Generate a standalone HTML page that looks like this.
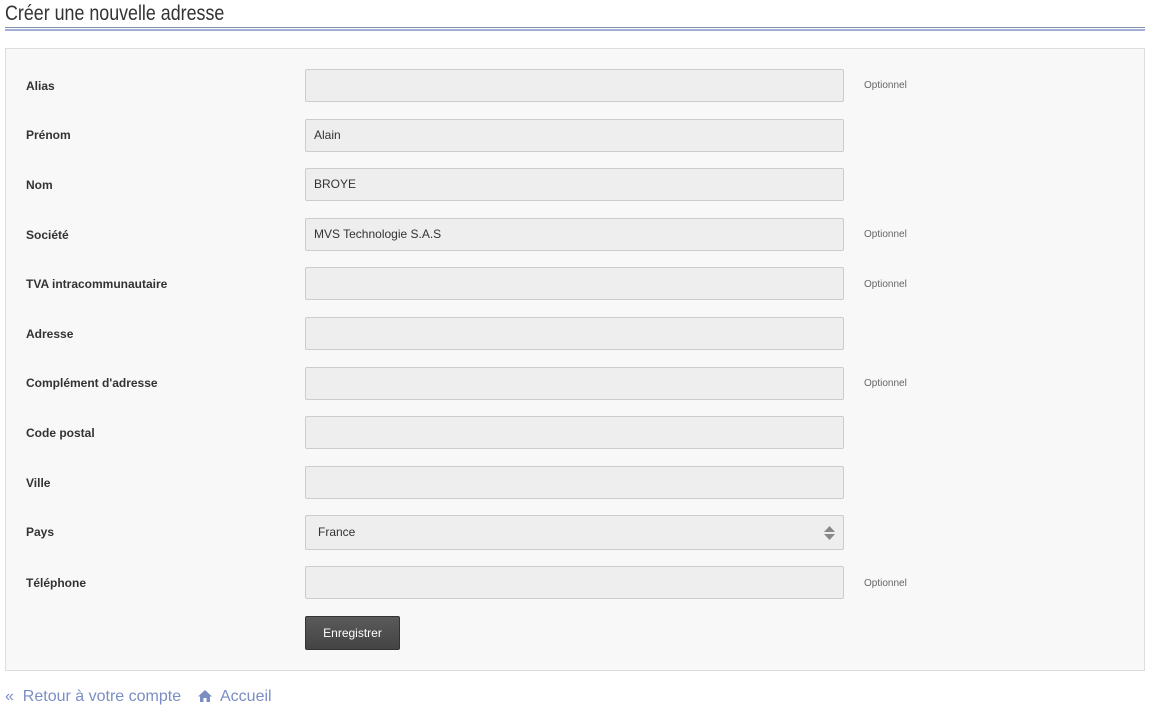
<!DOCTYPE html>
<html><head><meta charset="utf-8"><style>
body{margin:0;width:1151px;height:714px;background:#fff;font-family:"Liberation Sans",Arial,sans-serif;position:relative;overflow:hidden}
.t{position:absolute;left:5px;top:1px;font-family:"Liberation Sans Narrow","Liberation Sans",sans-serif;font-size:21px;color:#333;line-height:26px;transform:scaleX(0.85);transform-origin:0 0;white-space:nowrap}
.l1{position:absolute;left:5px;width:1140px;top:27px;height:1px;background:#8590ae}
.l2{position:absolute;left:5px;width:1140px;top:29px;height:2px;background:#a3b0d6}
.p{position:absolute;left:5px;top:48px;width:1138px;height:621px;border:1px solid #ddd;background:#f8f8f8}
.lab{position:absolute;left:26px;font-size:12px;font-weight:bold;color:#333}
.in{position:absolute;left:305px;height:31px;border:1px solid #ccc;background:#eee;border-radius:2px;font-size:12px;color:#333;line-height:31px;padding-left:8px;box-sizing:content-box;width:529px}
.op{position:absolute;left:864px;font-size:10px;color:#666}
.btn{position:absolute;left:305px;top:616px;width:95px;height:34px;background:linear-gradient(#5a5a5a,#444);border:1px solid #333;border-radius:2px;box-sizing:border-box;color:#fff;font-size:12px;text-align:center;line-height:32px}
.f{position:absolute;top:687px;font-size:16px;line-height:20px;color:#7b8ec4;white-space:nowrap}
</style></head><body>
<div class="t">Créer une nouvelle adresse</div>
<div class="l1"></div><div class="l2"></div>
<div class="p"></div>

<div class="lab" style="top:79px">Alias</div><div class="in" style="top:69px"></div><div class="op" style="top:80px">Optionnel</div>
<div class="lab" style="top:128px">Prénom</div><div class="in" style="top:119px">Alain</div>
<div class="lab" style="top:178px">Nom</div><div class="in" style="top:168px">BROYE</div>
<div class="lab" style="top:228px">Société</div><div class="in" style="top:218px">MVS Technologie S.A.S</div><div class="op" style="top:229px">Optionnel</div>
<div class="lab" style="top:277px">TVA intracommunautaire</div><div class="in" style="top:267px"></div><div class="op" style="top:279px">Optionnel</div>
<div class="lab" style="top:327px">Adresse</div><div class="in" style="top:317px"></div>
<div class="lab" style="top:376px">Complément d'adresse</div><div class="in" style="top:367px"></div><div class="op" style="top:378px">Optionnel</div>
<div class="lab" style="top:426px">Code postal</div><div class="in" style="top:416px"></div>
<div class="lab" style="top:476px">Ville</div><div class="in" style="top:466px"></div>
<div class="lab" style="top:525px">Pays</div><div class="in" style="top:515px;padding-left:12px;width:525px;height:33px;line-height:33px">France
<svg style="position:absolute;right:8px;top:10px" width="11" height="14" viewBox="0 0 11 14"><path d="M5.5 0L11 6H0z M0 8h11L5.5 14z" fill="#888"/></svg></div>
<div class="lab" style="top:576px">Téléphone</div><div class="in" style="top:566px"></div><div class="op" style="top:578px">Optionnel</div>
<div class="btn">Enregistrer</div>

<div class="f" style="left:5px">«&nbsp; Retour à votre compte</div>
<div class="f" style="left:198px"><svg width="14" height="12" viewBox="0 0 14 12" style="vertical-align:-1px"><path d="M7 0L14 6.5H12V12H8.5V8h-3v4H2V6.5H0z" fill="#7b8ec4"/></svg>&nbsp; Accueil</div>
</body></html>
